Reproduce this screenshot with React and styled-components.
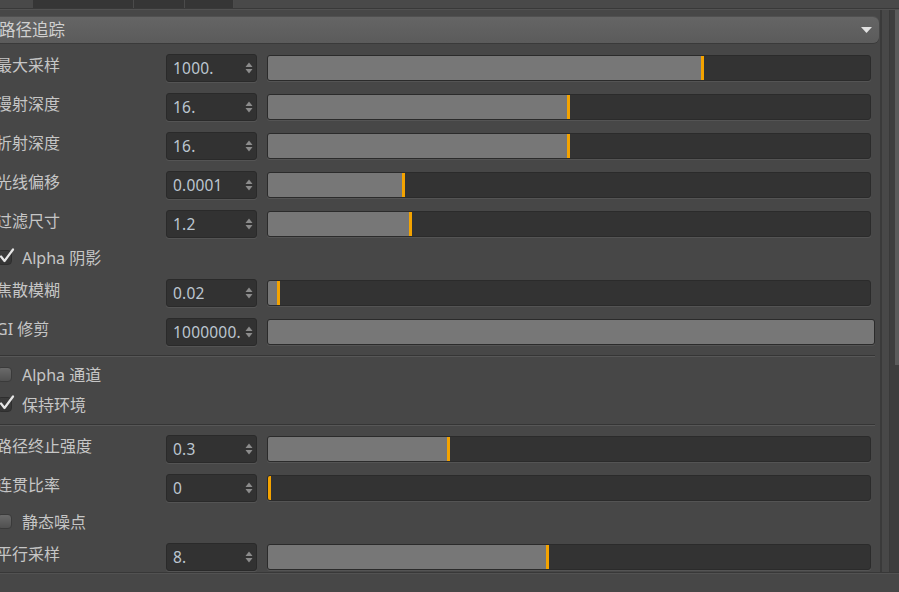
import React from "react";
import styled, { createGlobalStyle } from "styled-components";

const Global = createGlobalStyle`
  html, body { margin: 0; padding: 0; background: #474747; overflow: hidden; }
  body { font-family: "Noto Sans", "Noto Sans CJK SC", sans-serif; }
`;

const Page = styled.div`
  width: 899px;
  height: 592px;
  display: flex;
  flex-direction: column;
  background: #474747;
  overflow: hidden;
`;

const TabStrip = styled.div`
  height: 8px;
  display: flex;
  padding-left: 33px;
  background: #494949;
  border-bottom: 1px solid #393939;
  box-shadow: 0 1px 0 #525252;
`;

const Tab = styled.div`
  width: ${(p) => p.$w}px;
  background: #363636;
  border-right: 1px solid #4b4b4b;
`;

const Body = styled.div`
  display: flex;
  margin-top: 1px;
  height: 562px;
  border-bottom: 1px solid #383838;
  box-shadow: 0 1px 0 #525252;
`;

const Content = styled.div`
  width: 880px;
  padding-top: 7px;
  display: flex;
  flex-direction: column;
  overflow: hidden;
`;

const Frame = styled.div`
  width: 7px;
  background: #484848;
  border-left: 2px solid #3a3a3a;
  border-right: 1px solid #393939;
`;

const ScrollTrack = styled.div`
  flex: 1;
  display: flex;
  justify-content: flex-end;
  background: #3e3e3e;
`;

const ScrollThumb = styled.div`
  width: 4px;
  height: 355px;
  background: #5b5b5b;
`;

const Header = styled.div`
  height: 26px;
  margin-right: 1px;
  display: flex;
  align-items: center;
  justify-content: space-between;
  padding: 0 7px 0 0;
  background: linear-gradient(#656565, #5b5b5b);
  border-radius: 0 6px 6px 0;
  box-shadow: 0 1px 0 #3a3a3a, 0 -1px 0 #505050;
  color: #d0d0d0;
  font-size: 16.5px;
`;

const HeaderTitle = styled.span`
  margin-left: -1px;
  line-height: 26px;
`;

const Rows = styled.div`
  padding-top: 5px;
  display: flex;
  flex-direction: column;
`;

const NumRow = styled.div`
  height: 39px;
  margin-left: -4px;
  padding-right: ${(p) => (p.$wide ? 5 : 9)}px;
  display: grid;
  grid-template-columns: 160px 91px 1fr;
  column-gap: 10px;
  align-items: center;
`;

const Label = styled.div`
  color: #c6c6c6;
  font-size: 16px;
  padding-bottom: 8px;
  white-space: nowrap;
`;

const NumBox = styled.div`
  position: relative;
  height: 26px;
  background: #323232;
  border: 1px solid #2a2a2a;
  border-radius: 3px;
  box-shadow: 0 1px 0 #545454;
  display: flex;
  align-items: center;
  padding-left: 6px;
  color: #bcc6d0;
  font-size: 15.5px;
  letter-spacing: 0.2px;
  overflow: hidden;
`;

const Spinner = styled.svg`
  position: absolute;
  right: 3px;
  top: 7px;
`;

const Slider = styled.div`
  position: relative;
  height: 24px;
  background: #333333;
  border: 1px solid #2b2b2b;
  border-radius: 3px;
  box-shadow: 0 1px 0 #545454;
  display: flex;
  overflow: hidden;
`;

const Fill = styled.div`
  height: 100%;
  background: #777777;
`;

const Marker = styled.div`
  width: 3px;
  height: 100%;
  background: #f4a300;
`;

const CheckRow = styled.div`
  height: 30px;
  margin-left: -3px;
  display: flex;
  align-items: center;
  gap: 10px;
  padding-bottom: 2px;
  box-sizing: border-box;
`;

const Box = styled.div`
  position: relative;
  width: 15px;
  height: 15px;
  box-sizing: border-box;
  border-radius: 4px;
  border: 1px solid ${(p) => (p.$on ? "#2e2e2e" : "#3a3a3a")};
  background: ${(p) =>
    p.$on ? "linear-gradient(#3c3c3c, #353535)" : "linear-gradient(#6a6a6a, #505050)"};
`;

const Tick = styled.svg`
  position: absolute;
  left: 1px;
  top: -3px;
`;

const CheckLabel = styled.span`
  color: #c6c6c6;
  font-size: 16px;
`;

const Separator = styled.div`
  height: 9px;
  margin-right: 5px;
  display: flex;
  flex-direction: column;
  justify-content: center;
  &::before {
    content: "";
    height: 1px;
    background: #353535;
  }
  &::after {
    content: "";
    height: 1px;
    background: #575757;
  }
`;

const SPAN = 602;

const rows = [
  { type: "num", label: "最大采样", value: "1000.", pos: 433 },
  { type: "num", label: "漫射深度", value: "16.", pos: 299 },
  { type: "num", label: "折射深度", value: "16.", pos: 299 },
  { type: "num", label: "光线偏移", value: "0.0001", pos: 134 },
  { type: "num", label: "过滤尺寸", value: "1.2", pos: 141 },
  { type: "check", label: "Alpha 阴影", on: true },
  { type: "num", label: "焦散模糊", value: "0.02", pos: 9 },
  { type: "num", label: "GI 修剪", value: "1000000.", full: true },
  { type: "sep" },
  { type: "check", label: "Alpha 通道", on: false },
  { type: "check", label: "保持环境", on: true },
  { type: "sep" },
  { type: "num", label: "路径终止强度", value: "0.3", pos: 179 },
  { type: "num", label: "连贯比率", value: "0", pos: 0 },
  { type: "check", label: "静态噪点", on: false },
  { type: "num", label: "平行采样", value: "8.", pos: 278 },
];

function SpinArrows() {
  return (
    <Spinner width="8" height="12" viewBox="0 0 8 12">
      <path d="M4 0.5 L7.5 5 L0.5 5 Z" fill="#8c8c8c" />
      <path d="M4 11.5 L7.5 7 L0.5 7 Z" fill="#8c8c8c" />
    </Spinner>
  );
}

function Row({ r }) {
  if (r.type === "sep") return <Separator />;
  if (r.type === "check")
    return (
      <CheckRow>
        <Box $on={r.on}>
          {r.on && (
            <Tick width="16" height="16" viewBox="0 0 16 16">
              <path d="M2 8.5 L5.5 13 L14 1.5" stroke="#e6e6e6" strokeWidth="2.2" fill="none" strokeLinecap="round" strokeLinejoin="round" />
            </Tick>
          )}
        </Box>
        <CheckLabel>{r.label}</CheckLabel>
      </CheckRow>
    );
  return (
    <NumRow $wide={r.full}>
      <Label>{r.label}</Label>
      <NumBox>
        {r.value}
        <SpinArrows />
      </NumBox>
      <Slider>
        <Fill style={{ width: r.full ? "100%" : `${(r.pos / SPAN) * 100}%` }} />
        {!r.full && <Marker />}
      </Slider>
    </NumRow>
  );
}

export default function App() {
  return (
    <Page>
      <Global />
      <TabStrip>
        <Tab $w={100} />
        <Tab $w={50} />
        <Tab $w={48} />
      </TabStrip>
      <Body>
        <Content>
          <Header>
            <HeaderTitle>路径追踪</HeaderTitle>
            <svg width="11" height="6" viewBox="0 0 11 6">
              <path d="M0 0 L11 0 L5.5 6 Z" fill="#e2e2e2" />
            </svg>
          </Header>
          <Rows>
            {rows.map((r, i) => (
              <Row key={i} r={r} />
            ))}
          </Rows>
        </Content>
        <Frame />
        <ScrollTrack>
          <ScrollThumb />
        </ScrollTrack>
      </Body>
    </Page>
  );
}
